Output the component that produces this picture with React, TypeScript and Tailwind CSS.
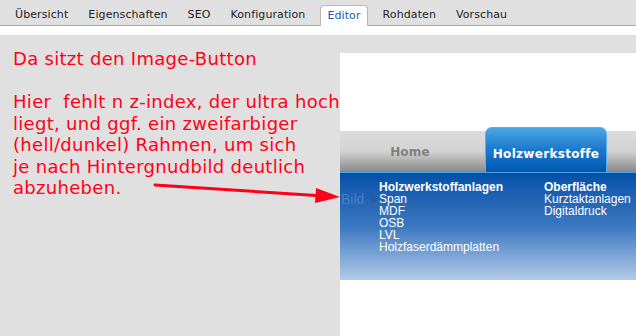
import React from "react";

const tabs = ["Übersicht", "Eigenschaften", "SEO", "Konfiguration", "Editor", "Rohdaten", "Vorschau"];

export default function App() {
  return (
    <div className="relative w-[636px] h-[336px] overflow-hidden bg-white flex flex-col font-['DejaVu_Sans',sans-serif]">
      {/* Reiter oben */}
      <div className="h-[26px] bg-[#e0e0e0] border-b border-[#a9a9a9] flex items-end pl-[5px] text-[11px] tracking-[0.1px] text-[#222]">
        {tabs.map((t) =>
          t === "Editor" ? (
            <div
              key={t}
              className="h-[21px] -mb-px px-[6px] mx-[5px] bg-white border border-b-0 border-[#b8b8b8] rounded-t-[4px] text-[#1560aa] flex items-center"
            >
              {t}
            </div>
          ) : (
            <div key={t} className="h-[20px] px-[10px] flex items-center">
              {t}
            </div>
          )
        )}
      </div>

      <div className="h-[9px] bg-white" />

      {/* Inhalt */}
      <div className="flex-1 bg-[#e0e0e0] flex">
        <div className="w-[340px] shrink-0 pl-[13px] pt-[13px] text-[18px] leading-[21.5px] tracking-[0.3px] text-[#ff0018] whitespace-nowrap">
          <div>Da sitzt den Image-Button</div>
          <div className="h-[21.5px]" />
          <div className="whitespace-pre">Hier  fehlt n z-index, der ultra hoch</div>
          <div>liegt, und ggf. ein zweifarbiger</div>
          <div>(hell/dunkel) Rahmen, um sich</div>
          <div>je nach Hintergnudbild deutlich</div>
          <div>abzuheben.</div>
        </div>

        <div className="flex-1 mt-[18px] bg-white flex flex-col pt-[74px] font-['Liberation_Sans',sans-serif]">
          {/* Navigation */}
          <div className="relative h-[45px] flex items-end">
            <div className="absolute left-0 right-0 bottom-0 h-[41px] bg-gradient-to-b from-[#dcdcdc] via-[#d2d2d2] to-[#888]" />
            <div className="relative w-[140px] h-[41px] flex items-center justify-center text-[12px] tracking-[0.2px] font-bold text-[#808080] font-['DejaVu_Sans',sans-serif]">
              Home
            </div>
            <div className="relative ml-[5px] w-[122px] h-[45px] rounded-t-[7px] border border-b-0 border-[#5ab0ea] bg-gradient-to-b from-[#49a6e4] via-[#1a78cc] to-[#0058b0] flex items-center justify-center pt-[8px] text-[12px] font-bold text-white font-['DejaVu_Sans',sans-serif] tracking-[0.3px]">
              Holzwerkstoffe
            </div>
          </div>

          {/* Dropdown */}
          <div className="relative h-[108px] border-t border-[#4c9fe0] bg-gradient-to-b from-[#0050a8] via-[#3a78c0] to-[#b2cae6] flex gap-[41px] pl-[39px] pt-[8px] text-[12px] leading-[12px] text-white">
            <div className="absolute left-[1px] top-[18px] flex items-center gap-[6px] text-[14px] leading-[16px] text-[#4b7ec4]">
              <span>Bild</span>
              <span className="w-[6px] h-[6px] bg-[#2a5aa0] rounded-[1px]" />
            </div>
            <div className="flex flex-col">
              <div className="font-bold">Holzwerkstoffanlagen</div>
              <div>Span</div>
              <div>MDF</div>
              <div>OSB</div>
              <div>LVL</div>
              <div>Holzfaserdämmplatten</div>
            </div>
            <div className="flex flex-col">
              <div className="font-bold">Oberfläche</div>
              <div>Kurztaktanlagen</div>
              <div>Digitaldruck</div>
            </div>
          </div>
        </div>
      </div>

      {/* Pfeil */}
      <svg className="absolute left-[150px] top-[176px]" width="195" height="28" viewBox="0 0 195 28">
        <path d="M5 9 L174 20" stroke="#ff0018" strokeWidth="3" strokeLinecap="round" fill="none" />
        <path d="M166 12 L190 21 L165 27 Z" fill="#ff0018" />
      </svg>
    </div>
  );
}
